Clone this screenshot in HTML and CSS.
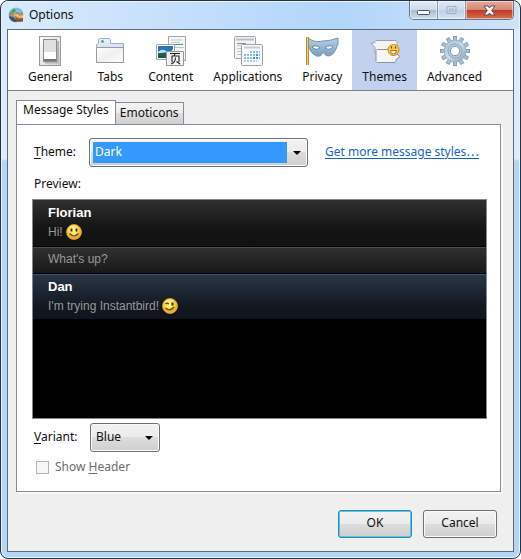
FILE: index.html
```html
<!DOCTYPE html>
<html lang="en">
<head>
    <meta charset="UTF-8">
    <meta name="viewport" content="width=device-width, initial-scale=1.0">
    <title>Options</title>
    <link rel="stylesheet" href="styles.css">
</head>
<body>
    <div class="window">
        <div class="titlebar">
            <svg class="app-icon" width="16" height="16" viewBox="0 0 16 16">
                <circle cx="8" cy="8" r="7.3" fill="#4d9fc4"/>
                <path d="M2 4Q5 0 10 1L14 4 13 7 9 5 6 7 3 6z" fill="#83bfd9"/>
                <path d="M4 3l3-1 1 2-3 2-2 1z" fill="#4f9a51"/>
                <path d="M1 9L4 6 9 7 12 5 15 8 15 15 9 15 3 12z" fill="#c98d48"/>
                <path d="M5 8l4-1 3 2 3-1v3l-5-1z" fill="#eac58a"/>
                <path d="M1 9l4 1 2 2 3 1-2 2Q3 15 1 10z" fill="#2c568e"/>
                <path d="M7 10l4 2 4-1v3l-5 1z" fill="#8f4d35"/>
            </svg>
            <span class="title">Options</span>
            <div class="controls">
                <button class="control" type="button" aria-label="Minimize">
                    <svg width="13" height="11" viewBox="0 0 13 11"><rect x="0.5" y="5.5" width="12" height="4" rx="1" fill="#fff" stroke="#4a5566"/></svg>
                </button>
                <button class="control" type="button" aria-label="Maximize" disabled>
                    <svg width="11" height="11" viewBox="0 0 11 11"><path d="M1 1.500h9v7h-9z" fill="none" stroke="#9eb0c3" stroke-width="1"/><path d="M3.500 4h4v2h-4z" fill="#dce8f4" stroke="#9eb0c3"/></svg>
                </button>
                <button class="control close" type="button" aria-label="Close">
                    <svg width="13" height="11" viewBox="0 0 13 11"><path d="M1 1h4l1.500 2L8 1h4L8.700 5.500 12 10H8L6.500 8 5 10H1l3.300-4.500z" fill="#fff" stroke="#604a55"/></svg>
                </button>
            </div>
        </div>
        <div class="client">
            <div class="toolbar">
                <button class="pane" type="button">
                    <svg width="32" height="32" viewBox="0 0 32 32">
                        <defs><linearGradient id="plate" x2="1" y2="1"><stop offset="0" stop-color="#fff"/><stop offset="1" stop-color="#d2d2d2"/></linearGradient></defs>
                        <rect x="5.500" y="1.500" width="21" height="29" fill="url(#plate)" stroke="#9a9a9a"/>
                        <path d="M11 27.500h13V6" fill="none" stroke="#b4b4b4" stroke-width="2"/>
                        <rect x="9.500" y="4.500" width="13" height="22" fill="#e0e0e0" stroke="#8c8c8c"/>
                        <rect x="10" y="17" width="12" height="7" fill="#fff"/>
                        <rect x="10" y="24" width="12" height="2" fill="#777"/>
                    </svg>
                    General
                </button>
                <button class="pane" type="button">
                    <svg width="32" height="32" viewBox="0 0 32 32">
                        <defs>
                            <linearGradient id="tabBlue" x2="0" y2="1"><stop offset="0" stop-color="#eaf3ff"/><stop offset="1" stop-color="#a9c8f0"/></linearGradient>
                            <linearGradient id="page" x2="1" y2="1"><stop offset="0" stop-color="#fff"/><stop offset=".5" stop-color="#f0f0f0"/><stop offset="1" stop-color="#fff"/></linearGradient>
                        </defs>
                        <path d="M2.500 27.500V9.500l2-1V4.500l2-1h9l1 1v4h13v19z" fill="url(#tabBlue)" stroke="#9fb0c6"/>
                        <path d="M2.500 12.500h27v15h-27z" fill="url(#page)" stroke="#9a9a9a"/>
                        <path d="M8.500 5v3M7 6.500h3" stroke="#4dab7d" stroke-width="1.500"/>
                    </svg>
                    Tabs
                </button>
                <button class="pane" type="button">
                    <svg width="32" height="32" viewBox="0 0 32 32">
                        <path d="M13.500 1.500h17v24h-17z" fill="#f4f7f7" stroke="#a0a6a8"/>
                        <path d="M16 5h11M16 7.500h9M16 12.500h13" stroke="#c0c7cb"/>
                        <path d="M16 9.500h12" stroke="#4e8c96"/>
                        <path d="M1.500 9.500h18v15h-18z" fill="#fff" stroke="#9fa6ad"/>
                        <path d="M3 11h15v12H3z" fill="#2778bd"/>
                        <path d="M3 17q4-4 8-1t7-2v4H3z" fill="#b9e0ee"/>
                        <path d="M3 19q7-3 15 0v4H3z" fill="#245b45"/>
                        <path d="M11.500 16.500h17v14h-17z" fill="#f3f3f3" stroke="#959595"/>
                        <g fill="none" stroke="#222" stroke-width="1.100"><path d="M15 18.500h10M20 18.500l-1 2.500M17 27v-6h7v6M20.500 22.500q0 5-4.500 6.500M21.500 26.500l3.500 2.500"/></g>
                    </svg>
                    Content
                </button>
                <button class="pane" type="button">
                    <svg width="32" height="32" viewBox="0 0 32 32">
                        <rect x="2.500" y="1.500" width="21" height="22" rx="1" fill="#f1f3f4" stroke="#9da3a6"/>
                        <path d="M4 4.500h18" stroke="#b8bec2" stroke-width="2"/><path d="M5 8.500h9" stroke="#858b8f"/><path d="M5 10.500h4M5 13.500h4M5 16.500h4M5 19.500h4" stroke="#c1c7ca"/><path d="M10 10.500h11" stroke="#377d83"/>
                        <rect x="9.500" y="9.500" width="21" height="21" rx="1" fill="#f8fafb" stroke="#9da3a6"/>
                        <path d="M12 12.500h16" stroke="#c6cbcf" stroke-width="2"/>
                        <g fill="none" stroke="#85bfe0" stroke-width="2" stroke-dasharray="2 1"><path d="M18 17h10M12 20h16M12 23h16"/><path d="M12 26h13" stroke="#a9d3e8"/></g>
                        <g fill="none" stroke="#4497d2" stroke-width="2"><path d="M24 20h2M21 23h2M24 23h2"/></g>
                    </svg>
                    Applications
                </button>
                <button class="pane" type="button">
                    <svg width="34" height="32" viewBox="0 0 34 32">
                        <defs><linearGradient id="mask" x2="0" y2="1"><stop offset="0" stop-color="#b5d0e6"/><stop offset="1" stop-color="#779fbf"/></linearGradient></defs>
                        <path d="M3 3Q9 8 18 6 25 6 33 3q1 6-2 11-3 7-8 7-3 0-4.500-4-2 5-7 4Q3 18 3 3z" fill="url(#mask)" stroke="#7797b1"/>
                        <path d="M7 12q4-3 8 1-4 3-8-1zM20 13q5-4 8-1-4 4-8 1z" fill="#fff" stroke="#66859f"/>
                        <path d="M2.500 2v28" stroke="#b88a3c" stroke-width="3"/><path d="M2.500 2v28" stroke="#edce80"/>
                    </svg>
                    Privacy
                </button>
                <button class="pane selected" type="button">
                    <svg width="32" height="32" viewBox="0 0 32 32">
                        <path d="M7 5.500h20l1 1v11l-1 1H7l-1-1v-5l-4-4 4-1V6.500z" fill="#f4f4f4" stroke="#9ba1aa"/>
                        <path d="M8 14.500h18l1 1v3l4 3-4 3v2l-1 1H8l-1-1v-11z" fill="#f6f6f6" stroke="#8f959e"/>
                        <circle cx="24.500" cy="15" r="5.500" fill="#ffd047" stroke="#d58209"/>
                        <path d="M21.500 15.500h6q0 3.500-3 3.500t-3-3.500z" fill="#fff" stroke="#874c0c" stroke-width=".8"/>
                        <path d="M22.500 11.500v2M26.500 11.500v2" stroke="#693d0c" stroke-width="1.300"/>
                    </svg>
                    Themes
                </button>
                <button class="pane" type="button">
                    <svg width="32" height="32" viewBox="0 0 32 32">
                        <defs><linearGradient id="gear" x2="1" y2="1"><stop offset="0" stop-color="#a6c0d4"/><stop offset=".5" stop-color="#c9dbe7"/><stop offset="1" stop-color="#829db5"/></linearGradient></defs>
                        <g stroke="#809db4" stroke-width="4"><path d="M16 1v30M1 16h30M8.500 3l15 26M3 8.500l26 15M23.500 3l-15 26M29 8.500l-26 15"/></g>
                        <g stroke="#a9c3d6" stroke-width="2.500"><path d="M16 2v28M2 16h28M9 3.900l14 24.200M3.900 9l24.200 14M23 3.900L9 28.100M28.100 9L3.900 23"/></g>
                        <circle cx="16" cy="16" r="11" fill="url(#gear)" stroke="#91abbf" stroke-width=".8"/>
                        <circle cx="16" cy="16" r="7" fill="#b8cedd" stroke="#8aa5ba"/>
                        <circle cx="16" cy="16" r="4.700" fill="#fff" stroke="#7f99ae"/>
                    </svg>
                    Advanced
                </button>
            </div>
            <div class="content">
                <div class="tabs" role="tablist">
                    <button class="tab active" type="button" role="tab" aria-selected="true">Message Styles</button>
                    <button class="tab" type="button" role="tab" aria-selected="false">Emoticons</button>
                </div>
                <form class="panel" id="optionsForm">
                    <div class="row">
                        <label for="theme"><u>T</u>heme:</label>
                        <div class="combo wide">
                            <select id="theme"><option>Dark</option></select>
                        </div>
                        <a class="more" href="#">Get more message styles<span class="dots">⋯</span></a>
                    </div>
                    <div class="preview-label">Preview:</div>
                    <div class="preview">
                        <div class="message">
                            <div class="sender">Florian</div>
                            <p>Hi!
                                <svg width="16" height="16" viewBox="0 0 16 16">
                                    <defs><radialGradient id="face" cx=".45" cy=".35"><stop offset="0" stop-color="#fff3a0"/><stop offset=".6" stop-color="#ffdd57"/><stop offset="1" stop-color="#eeb12e"/></radialGradient></defs>
                                    <circle cx="8" cy="8" r="7.500" fill="url(#face)" stroke="#e0a52e" stroke-width=".8"/>
                                    <path d="M5.500 4.500v3M10.500 4.500v3" stroke="#302a1c" stroke-width="1.800"/>
                                    <path d="M3.500 9.500q4.500 5 9 0" fill="none" stroke="#6b4a12" stroke-width="1.200"/>
                                </svg>
                            </p>
                        </div>
                        <div class="message next"><p>What's up?</p></div>
                        <div class="message blue">
                            <div class="sender">Dan</div>
                            <p>I'm trying Instantbird!
                                <svg width="16" height="16" viewBox="0 0 16 16">
                                    <circle cx="8" cy="8" r="7.500" fill="url(#face)" stroke="#e0a52e" stroke-width=".8"/>
                                    <path d="M3.500 6q1.500-1.500 3.500 0M3.500 10q4.500 4 8.500-1" fill="none" stroke="#6b4a12" stroke-width="1.300"/>
                                    <path d="M10.500 4.500v3" stroke="#302a1c" stroke-width="2"/>
                                </svg>
                            </p>
                        </div>
                    </div>
                    <div class="row variant">
                        <label for="variant"><u>V</u>ariant:</label>
                        <div class="combo">
                            <select id="variant"><option>Blue</option></select>
                        </div>
                    </div>
                    <div class="check">
                        <input type="checkbox" id="showHeader" disabled>
                        <label for="showHeader">Show <u>H</u>eader</label>
                    </div>
                </form>
                <div class="buttons">
                    <button class="btn default" type="submit" form="optionsForm">OK</button>
                    <button class="btn" type="button">Cancel</button>
                </div>
            </div>
        </div>
    </div>
</body>
</html>
```
FILE: styles.css
```css
* { box-sizing: border-box; }
body { margin: 0; background: white; font: 12px/16px "Noto Sans", sans-serif; color: #111; }
button, select, input { font: inherit; color: inherit; margin: 0; }
u { text-underline-offset: 2px; }

/* window frame */
.window { padding: 0 6px 6px; border: 1px solid #26323f; border-radius: 8px; background: linear-gradient(#dcecfc 30px, #dcecfc 158px, #b4d5f6 160px); box-shadow: inset 0 0 0 1px #e6f3ff; }
.titlebar { display: flex; align-items: flex-start; height: 28px; margin: 0 -5px; padding: 0 5px; background: linear-gradient(90deg, #d8eafd, #c4dffb 35%, #b2d5fb 65%, #cde3f8); border-radius: 7px 7px 0 0; box-shadow: inset 0 1px 0 #e9f4ff; }
.app-icon { margin: 6px 5px 0 1px; }
.title { flex: 1; margin-top: 6px; }
.controls { display: flex; border: 1px solid #66788c; border-top: 0; border-radius: 0 0 5px 5px; overflow: hidden; }
.control { display: flex; align-items: center; justify-content: center; width: 28px; height: 18px; padding: 0; border: 0; border-right: 1px solid #8496aa; background: linear-gradient(#e4edf6, #ccd9e7 50%, #a9bccf 50%, #cfdfef); box-shadow: inset 0 0 0 1px #ffffff80; }
.control:disabled { background: linear-gradient(#dce9f6, #c9dbed 50%, #bcd0e4 50%, #d3e4f4); }
.control.close { width: 47px; border-right: 0; background: linear-gradient(#e8aa9d, #d98371 50%, #bd3823 50%, #d67152); }

.client { border: 1px solid #5b6b7b; background: #efefef; }

/* pane selector */
.toolbar { display: flex; padding-left: 10px; background: white; border-bottom: 1px solid #808080; }
.pane { display: flex; flex-direction: column; align-items: center; gap: 2px; min-width: 56px; height: 60px; padding: 5px 10px 0; border: 0; background: none; }
.selected { background: #c1d2ee; }
.pane svg { flex: none; }

.content { padding: 9px 12px 13px 8px; }

/* tabs */
.tabs { display: flex; align-items: flex-end; }
.tab { height: 22px; padding: 0 4px 2px; border: 1px solid #898c95; border-left: 0; border-bottom: 0; background: linear-gradient(#f2f2f2, #ebebeb 50%, #dddddd 50%, #cfcfcf); }
.tab.active { height: 24px; padding: 0 6px 5px; border-left: 1px solid #898c95; background: white; }
.panel { padding: 13px 13px 16px 15px; border: 1px solid #898c95; background: white; box-shadow: 2px 2px 0 #f9f9f9; }

.row { display: flex; align-items: center; }
.row label { width: 57px; padding: 0 0 1px 2px; }
.combo { position: relative; width: 70px; }
.combo.wide { width: 219px; }
.combo::after { content: ""; position: absolute; right: 7px; top: 13px; border: 4px solid transparent; border-top-color: black; border-bottom: 0; pointer-events: none; }
select { display: block; width: 100%; height: 29px; padding: 0 5px 2px; appearance: none; border: 1px solid #707070; border-radius: 3px; background: linear-gradient(#f2f2f2, #ebebeb 50%, #dddddd 50%, #cfcfcf); box-shadow: inset 0 0 0 1px #fbfbfb; }
.wide select { color: white; background: linear-gradient(#3399ff, #3399ff) 3px 3px / calc(100% - 23px) 21px no-repeat, linear-gradient(#f2f2f2, #ebebeb 50%, #dddddd 50%, #cfcfcf); }
.more { margin-left: 17px; padding-bottom: 1px; color: #1565c0; white-space: nowrap; text-underline-offset: 2px; }
.dots { font-family: "Noto Sans CJK JP", sans-serif; line-height: 1; }
.preview-label { margin: 9px 0 7px 2px; }

/* message preview */
.preview { height: 220px; border: 1px solid #828790; background: black; color: #999; font: 12px/16px "Liberation Sans", Arial, sans-serif; }
.message { height: 47px; padding: 5px 15px 0; border-bottom: 1px solid black; background: linear-gradient(#303030, #151515 60%, #111111); }
.message p { display: flex; align-items: center; gap: 3px; margin: 3px 0 0; }
.message.next { height: 27px; padding-top: 0; border-top: 1px solid #4c4c4c; background: linear-gradient(#303030, #181818); }
.message.blue { height: 45px; padding-top: 4px; border-top: 1px solid #3e5275; border-bottom: 0; background: linear-gradient(#293547, #121820 70%, #10141d); }
.sender { color: white; font-size: 13px; font-weight: bold; }

.variant { margin-top: 4px; }
.variant label { width: 58px; }
.check { display: flex; align-items: center; gap: 6px; margin: 7px 0 0 4px; color: #6d6d6d; }
.check input { width: 13px; height: 13px; appearance: none; border: 1px solid #b5b5b5; background: #f6f6f6; }

/* dialog buttons */
.buttons { display: flex; justify-content: flex-end; gap: 11px; margin: 18px 4px 0 0; }
.btn { width: 74px; height: 28px; padding: 0 0 2px; border: 1px solid #707070; border-radius: 3px; background: linear-gradient(#f2f2f2, #ebebeb 50%, #dddddd 50%, #cfcfcf); box-shadow: inset 0 0 0 1px #fbfbfb; }
.default { border-color: #3c7fb1; box-shadow: inset 0 0 0 1px #42cdf2; }
```
